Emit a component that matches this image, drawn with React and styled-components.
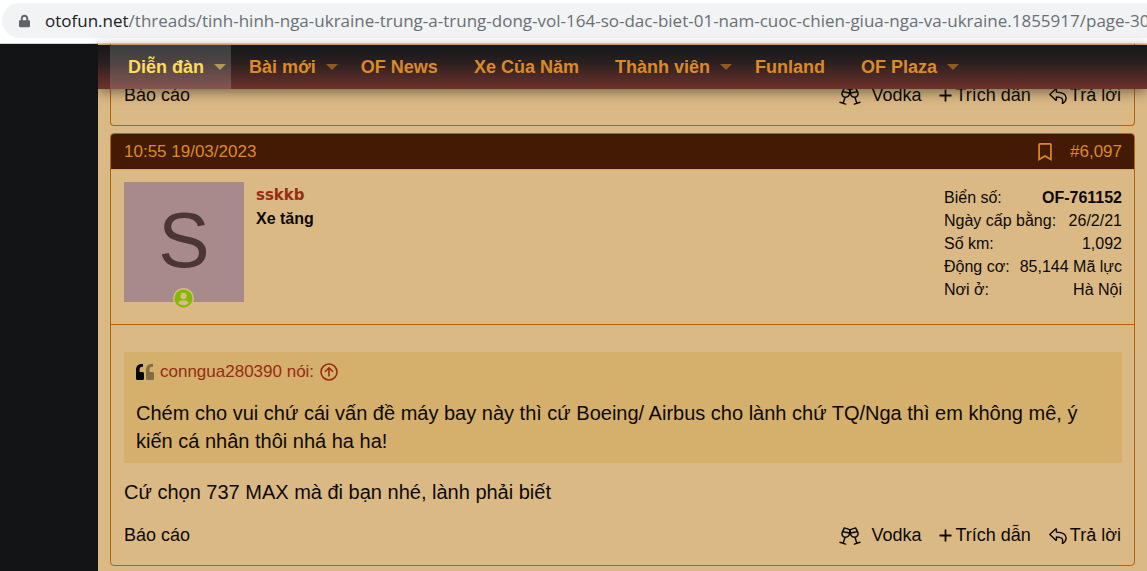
import React from "react";
import styled, { createGlobalStyle } from "styled-components";
import { FaLock, FaRegBookmark } from "react-icons/fa";

const colors = {
  page: "#dbb985",
  sidebar: "#131416",
  border: "#b0640f",
  header: "#431a04",
  orange: "#dd8a26",
  link: "#962d12",
  quote: "#d5af6c",
};

const GlobalStyle = createGlobalStyle`
  * {
    box-sizing: border-box;
  }
  body {
    margin: 0;
    background: ${colors.page};
    color: #0c0a08;
    font-family: "Liberation Sans", Arial, sans-serif;
    font-size: 17px;
    overflow: hidden;
  }
  a {
    color: inherit;
    text-decoration: none;
  }
`;

const BrowserBar = styled.div`
  height: 44px;
  padding-top: 3px;
  background: #fff;
  border-bottom: 1px solid #d3d4d6;
`;

const AddressBox = styled.label`
  display: flex;
  align-items: center;
  height: 35px;
  margin-left: 2px;
  padding-left: 17px;
  border-radius: 18px 0 0 18px;
  background: #f1f3f4;
  color: #202124;
  font-family: "Open Sans", "Noto Sans", sans-serif;
  font-size: 17px;
  svg {
    width: 11px;
    height: 14px;
    margin-right: 15px;
    color: #5f6368;
  }
`;

const AddressInput = styled.input`
  flex: 1;
  min-width: 0;
  padding: 0;
  border: 0;
  outline: 0;
  background: none;
  color: #6b6f74;
  font: inherit;
`;

const Layout = styled.div`
  display: grid;
  grid-template-columns: 98px minmax(0, 1fr);
`;

const Sidebar = styled.div`
  position: relative;
  z-index: 3;
  background: ${colors.sidebar};
`;

const Main = styled.main`
  min-height: calc(100vh - 44px);
`;

const Nav = styled.nav`
  position: sticky;
  top: 0;
  z-index: 2;
  display: flex;
  height: 44px;
  margin-top: 1px;
  background: linear-gradient(#151717, #2a2020 40%, #6e322b);
  box-shadow: 0 3px 12px rgba(20, 20, 20, 0.5);
  padding-left: 12px;
  font-size: 18px;
`;

const NavLink = styled.a`
  display: flex;
  align-items: center;
  gap: 10px;
  padding: 0 ${({ $menu }) => ($menu ? 5 : 18)}px 0 18px;
  background: ${({ $active }) => ($active ? "rgba(255, 255, 255, 0.17)" : "none")};
  color: ${({ $active }) => ($active ? "#fedd5b" : colors.orange)};
  font-weight: bold;
  white-space: nowrap;
`;

const Caret = styled.span`
  border: 6px solid transparent;
  border-top-color: currentColor;
  border-bottom: 0;
  opacity: 0.55;
`;

const Posts = styled.div`
  display: flex;
  flex-direction: column;
  gap: 7px;
  margin-top: -45px;
  padding: 0 12px;
`;

const Article = styled.article`
  border: 1px solid ${colors.border};
  border-top-width: ${({ $cut }) => ($cut ? 0 : 1)}px;
  border-radius: ${({ $cut }) => ($cut ? "0 0 4px 4px" : "4px")};
`;

const PostHeader = styled.header`
  display: flex;
  align-items: center;
  height: 36px;
  padding: 0 12px 0 13px;
  border-bottom: 1px solid #d9a865;
  border-radius: 3px 3px 0 0;
  background: ${colors.header};
  color: ${colors.orange};
  svg {
    display: block;
    width: 14px;
    height: 18px;
  }
`;

const HeaderActions = styled.div`
  display: flex;
  align-items: center;
  gap: 18px;
  margin-left: auto;
`;

const PlainButton = styled.button`
  padding: 0;
  border: 0;
  background: none;
  color: inherit;
  font: inherit;
`;

const User = styled.section`
  display: flex;
  gap: 12px;
  padding: 12px 12px 22px 13px;
  border-bottom: 1px solid ${colors.border};
  font-size: 16px;
`;

const Avatar = styled.a`
  position: relative;
  width: 120px;
  height: 120px;
  background: #a98a8a;
  color: #4b3535;
  font-size: 77px;
  line-height: 116px;
  text-align: center;
`;

const Online = styled.svg`
  position: absolute;
  bottom: -7px;
  left: 49px;
  width: 21px;
  height: 21px;
`;

const UserInfo = styled.div`
  padding-top: 1px;
`;

const UserName = styled.a`
  display: block;
  color: ${colors.link};
  font-family: "DejaVu Sans", Verdana, sans-serif;
  font-size: 15px;
  font-weight: bold;
  line-height: 24px;
`;

const UserTitle = styled.div`
  font-weight: bold;
  line-height: 24px;
`;

const Stats = styled.dl`
  width: 178px;
  margin: 4px 0 0 auto;
`;

const Stat = styled.div`
  display: flex;
  justify-content: space-between;
  line-height: 23px;
  white-space: nowrap;
  dt,
  dd {
    margin: 0;
  }
  dd {
    font-weight: ${({ $bold }) => ($bold ? "bold" : "normal")};
  }
`;

const Message = styled.div`
  padding: 27px 12px 0 13px;
  font-size: 20px;
  line-height: 28px;
  p {
    margin: 0;
  }
`;

const Quote = styled.blockquote`
  margin: 0 0 15px;
  padding: 6px 12px 8px;
  background: ${colors.quote};
`;

const QuoteTitle = styled.a`
  display: flex;
  align-items: center;
  gap: 6px;
  margin-bottom: 13px;
  color: ${colors.link};
  font-size: 17px;
`;

const Footer = styled.footer`
  display: flex;
  align-items: center;
  height: 21px;
  margin: 19px 13px;
  font-size: 18px;
`;

const Actions = styled.div`
  display: flex;
  gap: 18px;
  margin-left: auto;
`;

const Action = styled.a`
  display: flex;
  align-items: center;
  gap: ${({ $wide }) => ($wide ? 10 : 3)}px;
`;

const Glasses = () => (
  <svg width="22" height="18" viewBox="0 0 22 18" fill="none" stroke="currentColor" strokeWidth="1.500" strokeLinecap="round" strokeLinejoin="round">
    <path d="M5.400.9 10.600 2.600C11.200 6.200 10.300 10 6.900 10.200 3.300 10.300 2.500 7.500 3.200 5.400Z" />
    <path d="M16.600.9 11.400 2.600C10.800 6.200 11.700 10 15.100 10.200 18.700 10.300 19.500 7.500 18.800 5.400Z" />
    <path d="M4 4.800l6.600 1.200M18 4.800l-6.600 1.200M6 10.500 4.200 16M16 10.500l1.800 5.500M1 15.200l5.600 1.900M21 15.200l-5.600 1.900" />
  </svg>
);

const Plus = () => (
  <svg width="13" height="13" viewBox="0 0 13 13" stroke="currentColor" strokeWidth="1.800">
    <path d="M6.500 .5v12M.5 6.500h12" />
  </svg>
);

const Reply = () => (
  <svg width="18" height="16" viewBox="0 0 18 16" fill="none" stroke="currentColor" strokeWidth="1.400" strokeLinejoin="round">
    <path d="M.8 6.500 6.600 1.100Q7.400.5 7.400 1.500V4.100c6 .1 9.700 1.500 9.700 5.900 0 2-1 3.800-3 5.200-.6.3-.9 0-.7-.6 1.200-4.100-1-5.500-6-5.600v2.700q0 1-.8.4Z" />
  </svg>
);

const QuoteMark = () => (
  <svg width="18" height="16" viewBox="0 0 18 16">
    <path fill="#000" d="M7 0v2.800H6C4.500 2.800 3.600 3.800 3.600 5.500V8H6.500Q8 8 8 9.500v5Q8 16 6.500 16h-5Q0 16 0 14.500V6C0 2.300 2.300 0 5.500 0Z" />
    <path fill="#836b43" d="M17 0v2.800h-1c-1.500 0-2.400 1-2.400 2.700V8h2.900Q18 8 18 9.500v5q0 1.500-1.500 1.500h-5Q10 16 10 14.500V6c0-3.700 2.300-6 5.500-6Z" />
  </svg>
);

const CircleUp = () => (
  <svg width="18" height="18" viewBox="0 0 18 18" fill="none" stroke="currentColor" strokeWidth="1.600">
    <circle cx="9" cy="9" r="8" />
    <path d="M9 13.500V5M5 8.800l4-4 4 4" />
  </svg>
);

const navItems = [
  { label: "Diễn đàn", menu: true, active: true },
  { label: "Bài mới", menu: true },
  { label: "OF News" },
  { label: "Xe Của Năm" },
  { label: "Thành viên", menu: true },
  { label: "Funland" },
  { label: "OF Plaza", menu: true },
];

const stats = [
  { label: "Biển số:", value: "OF-761152", bold: true },
  { label: "Ngày cấp bằng:", value: "26/2/21" },
  { label: "Số km:", value: "1,092" },
  { label: "Động cơ:", value: "85,144 Mã lực" },
  { label: "Nơi ở:", value: "Hà Nội" },
];

// tail of the previous message that is scrolled under the nav
const ScrolledMessage = styled.div`
  height: 22px;
`;

const PostFooter = () => (
  <Footer>
    <a href="#report">Báo cáo</a>
    <Actions>
      <Action href="#react" $wide>
        <Glasses />
        Vodka
      </Action>
      <Action href="#quote">
        <Plus />
        Trích dẫn
      </Action>
      <Action href="#reply">
        <Reply />
        Trả lời
      </Action>
    </Actions>
  </Footer>
);

export default function App() {
  return (
    <>
      <GlobalStyle />
      <BrowserBar>
        <AddressBox>
          <FaLock />
          <span>otofun.net</span>
          <AddressInput
            readOnly
            aria-label="Address"
            value="/threads/tinh-hinh-nga-ukraine-trung-a-trung-dong-vol-164-so-dac-biet-01-nam-cuoc-chien-giua-nga-va-ukraine.1855917/page-30"
          />
        </AddressBox>
      </BrowserBar>
      <Layout>
        <Sidebar />
        <Main>
          <Nav>
            {navItems.map(({ label, menu, active }) => (
              <NavLink href="#nav" key={label} $menu={menu} $active={active}>
                {label}
                {menu && <Caret />}
              </NavLink>
            ))}
          </Nav>
          <Posts>
            <Article $cut>
              <ScrolledMessage />
              <PostFooter />
            </Article>
            <Article>
              <PostHeader>
                <a href="#post">10:55 19/03/2023</a>
                <HeaderActions>
                  <PlainButton aria-label="Bookmark">
                    <FaRegBookmark />
                  </PlainButton>
                  <a href="#post">#6,097</a>
                </HeaderActions>
              </PostHeader>
              <User>
                <Avatar href="#user">
                  S
                  <Online viewBox="0 0 21 21">
                    <circle cx="10.500" cy="10.500" r="10.500" fill={colors.page} />
                    <circle cx="10.500" cy="10.500" r="9" fill="#7fb900" />
                    <circle cx="10.500" cy="8" r="3.200" fill={colors.page} />
                    <path d="M5.300 15c.5-2 2.500-2.700 5.200-2.700s4.700.7 5.200 2.700c-1.300 1.600-3 2.300-5.200 2.300S6.600 16.600 5.300 15Z" fill={colors.page} />
                  </Online>
                </Avatar>
                <UserInfo>
                  <UserName href="#user">sskkb</UserName>
                  <UserTitle>Xe tăng</UserTitle>
                </UserInfo>
                <Stats>
                  {stats.map(({ label, value, bold }) => (
                    <Stat key={label} $bold={bold}>
                      <dt>{label}</dt>
                      <dd>{value}</dd>
                    </Stat>
                  ))}
                </Stats>
              </User>
              <Message>
                <Quote>
                  <QuoteTitle href="#source">
                    <QuoteMark />
                    conngua280390 nói:
                    <CircleUp />
                  </QuoteTitle>
                  <p>
                    Chém cho vui chứ cái vấn đề máy bay này thì cứ Boeing/ Airbus cho lành chứ TQ/Nga thì em
                    không mê, ý kiến cá nhân thôi nhá ha ha!
                  </p>
                </Quote>
                <p>Cứ chọn 737 MAX mà đi bạn nhé, lành phải biết</p>
              </Message>
              <PostFooter />
            </Article>
          </Posts>
        </Main>
      </Layout>
    </>
  );
}
